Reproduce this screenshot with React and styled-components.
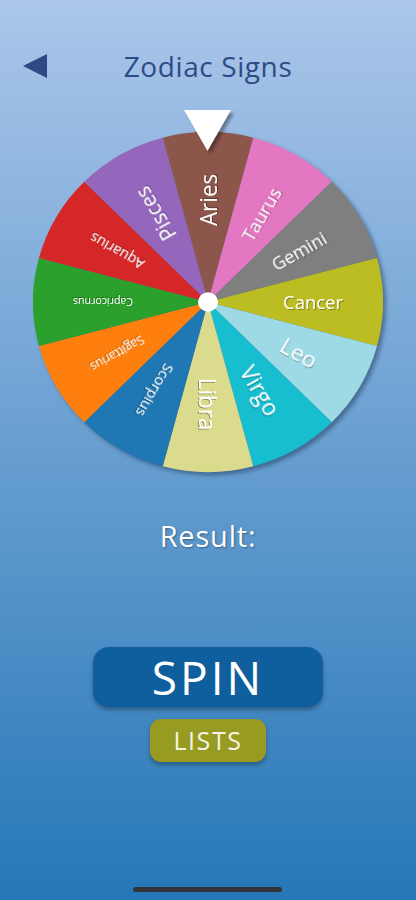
import React, { useMemo } from 'react'
import styled, { createGlobalStyle } from 'styled-components'

const FONT = '"Open Sans", "DejaVu Sans", sans-serif'

const SIGNS = [
  { name: 'Aries', color: '#8c564b' },
  { name: 'Taurus', color: '#e377c2' },
  { name: 'Gemini', color: '#7f7f7f' },
  { name: 'Cancer', color: '#bcbd22' },
  { name: 'Leo', color: '#9edae5' },
  { name: 'Virgo', color: '#17becf' },
  { name: 'Libra', color: '#dbdb8d' },
  { name: 'Scorpius', color: '#1f77b4' },
  { name: 'Sagittarius', color: '#ff7f0e' },
  { name: 'Capricornus', color: '#2ca02c' },
  { name: 'Aquarius', color: '#d62728' },
  { name: 'Pisces', color: '#9467bd' },
]

const R = 175
const LABEL_R = 105
const FIT = 60
const MAX_SIZE = 23

const GlobalStyle = createGlobalStyle`
  html, body {
    margin: 0;
    padding: 0;
  }
  body {
    font-family: ${FONT};
    background: #2577b7;
  }
`

const Page = styled.div`
  position: relative;
  width: 416px;
  height: 900px;
  overflow: hidden;
  display: flex;
  flex-direction: column;
  align-items: center;
  background: linear-gradient(180deg, #abc6ea 0%, #2577b7 100%);
`

const Header = styled.div`
  width: 100%;
  box-sizing: border-box;
  margin-top: 44px;
  height: 44px;
  padding: 0 23px;
  display: grid;
  grid-template-columns: 1fr auto 1fr;
  align-items: center;
`

const BackButton = styled.button`
  justify-self: start;
  border: none;
  background: none;
  padding: 0;
  width: 24px;
  height: 24px;
  display: flex;
  svg { display: block; }
`

const Title = styled.h1`
  margin: 0;
  font-size: 28px;
  font-weight: 400;
  line-height: 1;
  letter-spacing: 0.6px;
  color: #2f4b86;
`

const WheelArea = styled.div`
  position: relative;
  width: 380px;
  height: 380px;
  margin-top: 24px;
`

const WheelSvg = styled.svg`
  display: block;
  filter: drop-shadow(3px 3px 2px rgba(20, 40, 70, 0.45));
`

const Pointer = styled.svg`
  position: absolute;
  top: -2px;
  left: 50%;
  transform: translateX(-50%);
  filter: drop-shadow(3px 3px 1.5px rgba(0, 0, 0, 0.35));
`

const ResultLabel = styled.div`
  margin-top: 27px;
  font-size: 29px;
  line-height: 34px;
  letter-spacing: 0.8px;
  color: #ffffff;
  text-shadow: 1px 1px 2px rgba(0, 0, 0, 0.35);
`

const SpinButton = styled.button`
  margin-top: 94px;
  width: 230px;
  height: 60px;
  border: none;
  border-radius: 16px;
  background: #0f5e9e;
  box-shadow: 0 3px 4px rgba(0, 0, 0, 0.3);
  color: #ffffff;
  font-family: ${FONT};
  font-size: 46px;
  letter-spacing: 3px;
  line-height: 60px;
  padding: 0;
`

const ListsButton = styled.button`
  margin-top: 12px;
  width: 116px;
  height: 43px;
  border: none;
  border-radius: 11px;
  background: #979b22;
  box-shadow: 0 3px 4px rgba(0, 0, 0, 0.3);
  color: #f4f4e6;
  font-family: ${FONT};
  font-size: 25px;
  letter-spacing: 1.6px;
  line-height: 43px;
  padding: 0;
`

const HomeIndicator = styled.div`
  position: absolute;
  bottom: 8px;
  left: 133px;
  width: 149px;
  height: 5px;
  border-radius: 3px;
  background: #333438;
`

const Label = styled.text`
  font-family: ${FONT};
  fill: #ffffff;
`

function polar(deg, r) {
  const a = (deg * Math.PI) / 180
  return [r * Math.cos(a), r * Math.sin(a)]
}

function useLabelSizes() {
  return useMemo(() => {
    const ctx = document.createElement('canvas').getContext('2d')
    ctx.font = `100px ${FONT}`
    return SIGNS.map(s => {
      const w = ctx.measureText(s.name).width
      return Math.min(MAX_SIZE, (FIT * 100) / w)
    })
  }, [])
}

function Wheel() {
  const sizes = useLabelSizes()
  return (
    <WheelSvg width="380" height="380" viewBox="-190 -190 380 380">
      <defs>
        <filter id="labelShadow" x="-20%" y="-50%" width="140%" height="200%">
          <feDropShadow dx="1" dy="1" stdDeviation="0.6" floodColor="#000" floodOpacity="0.35" />
        </filter>
      </defs>
      <g transform="scale(1, 0.972)">
        {SIGNS.map((s, i) => {
          const mid = -90 + i * 30
          const [x1, y1] = polar(mid - 15, R)
          const [x2, y2] = polar(mid + 15, R)
          return (
            <path
              key={s.name}
              d={`M0 0 L${x1} ${y1} A${R} ${R} 0 0 1 ${x2} ${y2} Z`}
              fill={s.color}
            />
          )
        })}
        {SIGNS.map((s, i) => (
          <g key={s.name} transform={`rotate(${-90 + i * 30})`}>
            <Label
              x={LABEL_R}
              y="0"
              textAnchor="middle"
              dominantBaseline="central"
              fontSize={sizes[i]}
              filter="url(#labelShadow)"
            >
              {s.name}
            </Label>
          </g>
        ))}
        <circle cx="0" cy="0" r="10" fill="#ffffff" />
      </g>
    </WheelSvg>
  )
}

export default function App() {
  return (
    <>
      <GlobalStyle />
      <Page>
        <Header>
          <BackButton aria-label="Back">
            <svg width="24" height="24" viewBox="0 0 24 24">
              <polygon points="24,0 24,24 0,12" fill="#2d4a87" />
            </svg>
          </BackButton>
          <Title>Zodiac Signs</Title>
          <span />
        </Header>
        <WheelArea>
          <Wheel />
          <Pointer width="50" height="44" viewBox="0 0 50 44">
            <polygon points="1,0 48,0 24.5,41" fill="#ffffff" />
          </Pointer>
        </WheelArea>
        <ResultLabel>Result:</ResultLabel>
        <SpinButton>SPIN</SpinButton>
        <ListsButton>LISTS</ListsButton>
        <HomeIndicator />
      </Page>
    </>
  )
}
